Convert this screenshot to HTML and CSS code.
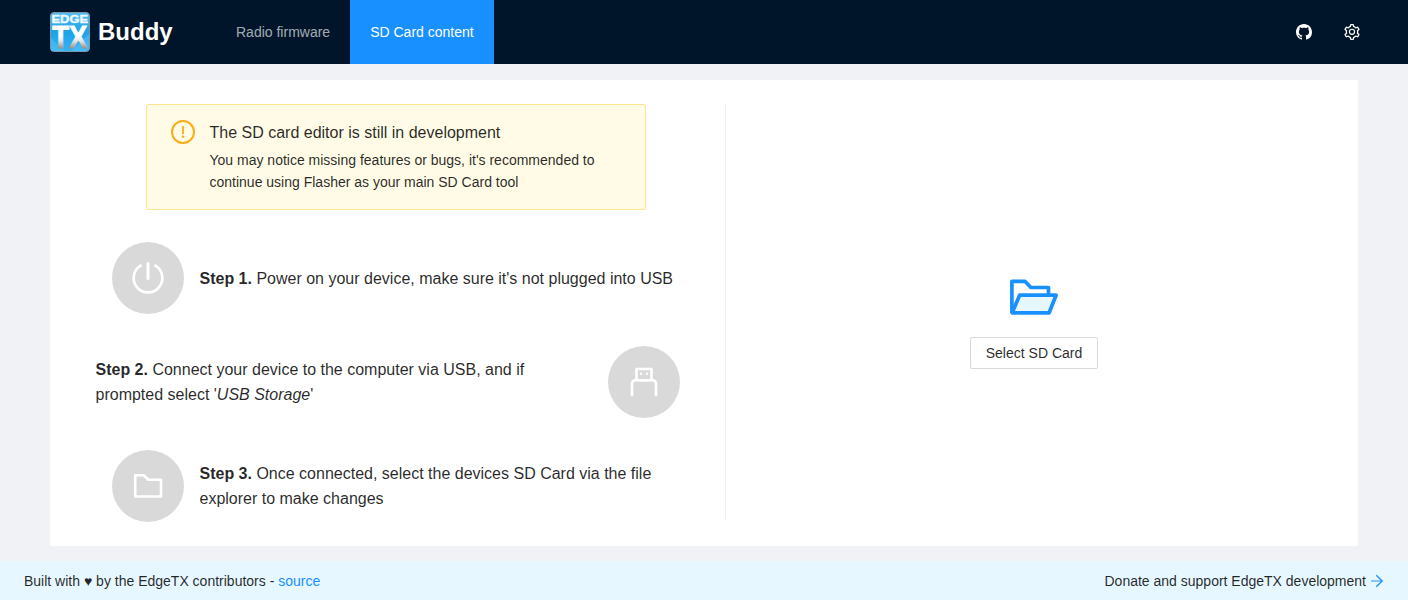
FILE: index.html
```html
<!DOCTYPE html>
<html lang="en">
<head>
<meta charset="utf-8">
<title>EdgeTX Buddy</title>
<link rel="stylesheet" href="styles.css">
</head>
<body>
<header class="header">
  <div class="brand">
    <svg class="logo" viewBox="0 0 40 40">
      <defs>
        <linearGradient id="sky" x1="0" y1="0" x2="0" y2="1"><stop offset="0" stop-color="#55bdec"/><stop offset=".5" stop-color="#1ba2e8"/><stop offset="1" stop-color="#35b4f4"/></linearGradient>
        <linearGradient id="metal" gradientUnits="userSpaceOnUse" x1="0" y1="14" x2="0" y2="36"><stop offset=".45" stop-color="#fff"/><stop offset=".68" stop-color="#e4e4e4"/><stop offset="1" stop-color="#969696"/></linearGradient>
      </defs>
      <rect x=".5" y=".5" width="39" height="39" rx="3.5" fill="url(#sky)" stroke="#7899a9"/>
      <path d="M1 26L14 39H1zM22 39l17-17v14l-3 3z" fill="#55c4fb" opacity=".5"/>
      <text class="logo-edge" x="1.5" y="11" textLength="36.5" lengthAdjust="spacingAndGlyphs">EDGE</text>
      <text class="logo-tx" x="2.2" y="35.5" textLength="35" lengthAdjust="spacingAndGlyphs" fill="url(#metal)" stroke="url(#metal)">TX</text>
    </svg>
    <span class="brand-name">Buddy</span>
  </div>
  <nav class="nav">
    <a class="nav-item">Radio firmware</a>
    <a class="nav-item active">SD Card content</a>
  </nav>
  <div class="tools">
    <svg class="tool" viewBox="0 0 16 16"><path fill="currentColor" d="M8 0C3.58 0 0 3.58 0 8c0 3.54 2.29 6.53 5.47 7.59.4.07.55-.17.55-.38 0-.19-.01-.82-.01-1.49-2.01.37-2.53-.49-2.69-.94-.09-.23-.48-.94-.82-1.13-.28-.15-.68-.52-.01-.53.63-.01 1.08.58 1.23.82.72 1.21 1.87.87 2.33.66.07-.52.28-.87.51-1.07-1.78-.2-3.64-.89-3.64-3.95 0-.87.31-1.59.82-2.15-.08-.2-.36-1.02.08-2.12 0 0 .67-.21 2.2.82.64-.18 1.32-.27 2-.27s1.36.09 2 .27c1.53-1.04 2.2-.82 2.2-.82.44 1.1.16 1.92.08 2.12.51.56.82 1.27.82 2.15 0 3.07-1.87 3.75-3.65 3.95.29.25.54.73.54 1.48 0 1.07-.01 1.93-.01 2.2 0 .21.15.46.55.38A8.01 8.01 0 0 0 16 8c0-4.42-3.58-8-8-8z"/></svg>
    <svg class="tool" viewBox="64 64 896 896"><path fill="currentColor" fill-rule="evenodd" d="M924.8 625.7l-65.5-56c3.1-19 4.7-38.4 4.7-57.8s-1.6-38.8-4.7-57.8l65.5-56a32.03 32.03 0 009.3-35.2l-.9-2.6a443.74 443.74 0 00-79.7-137.9l-1.8-2.1a32.12 32.12 0 00-35.1-9.5l-81.3 28.9c-30-24.6-63.5-44-99.7-57.6l-15.7-85a32.05 32.05 0 00-25.8-25.7l-2.7-.5c-52.1-9.4-106.9-9.4-159 0l-2.7.5a32.05 32.05 0 00-25.8 25.7l-15.8 85.4a351.86 351.86 0 00-99 57.4l-81.9-29.1a32 32 0 00-35.1 9.5l-1.8 2.1a446.02 446.02 0 00-79.7 137.9l-.9 2.6c-4.5 12.5-.8 26.5 9.3 35.2l66.3 56.6c-3.1 18.8-4.6 38-4.6 57.1 0 19.2 1.5 38.4 4.6 57.1L99 625.5a32.03 32.03 0 00-9.3 35.2l.9 2.6c18.1 50.4 44.9 96.9 79.7 137.9l1.8 2.1a32.12 32.12 0 0035.1 9.5l81.9-29.1c29.8 24.5 63.1 43.9 99 57.4l15.8 85.4a32.05 32.05 0 0025.8 25.7l2.7.5a449.4 449.4 0 00159 0l2.7-.5a32.05 32.05 0 0025.8-25.7l15.7-85a350 350 0 0099.7-57.6l81.3 28.9a32 32 0 0035.1-9.5l1.8-2.1c34.8-41.1 61.6-87.5 79.7-137.9l.9-2.6c4.5-12.3.8-26.3-9.3-35zM788.3 465.9c2.5 15.1 3.8 30.6 3.8 46.1s-1.3 31-3.8 46.1l-6.6 40.1 74.7 63.9a370.03 370.03 0 01-42.6 73.6L721 702.8l-31.4 25.8c-23.9 19.6-50.5 35-79.3 45.8l-38.1 14.3-17.9 97a377.5 377.5 0 01-85 0l-17.9-97.2-37.8-14.5c-28.5-10.8-55-26.2-78.7-45.7l-31.4-25.9-93.4 33.2c-17-22.9-31.2-47.6-42.6-73.6l75.5-64.5-6.5-40c-2.4-14.9-3.7-30.3-3.7-45.5 0-15.3 1.2-30.6 3.7-45.5l6.5-40-75.5-64.5c11.3-26.1 25.6-50.7 42.6-73.6l93.4 33.2 31.4-25.9c23.7-19.5 50.2-34.9 78.7-45.7l37.9-14.3 17.9-97.2c28.1-3.2 56.8-3.2 85 0l17.9 97 38.1 14.3c28.7 10.8 55.4 26.2 79.3 45.8l31.4 25.8 92.8-32.9c17 22.9 31.2 47.6 42.6 73.6L781.8 426l6.5 39.9z"/><circle cx="512" cy="502" r="144" fill="none" stroke="currentColor" stroke-width="64"/></svg>
  </div>
</header>
<main class="main">
  <div class="card">
    <section class="guide">
      <div class="alert">
        <svg class="alert-icon" viewBox="0 0 24 24"><circle cx="12" cy="12" r="11" fill="none" stroke="#faad14" stroke-width="2"/><path d="M11.1 6h1.8v8h-1.8z" fill="#faad14"/><circle cx="12" cy="16.7" r="1.2" fill="#faad14"/></svg>
        <div>
          <div class="alert-title">The SD card editor is still in development</div>
          <div class="alert-text">You may notice missing features or bugs, it's recommended to continue using Flasher as your main SD Card tool</div>
        </div>
      </div>
      <div class="step">
        <div class="avatar"><svg class="step-icon" viewBox="0 0 36 36"><path d="M10.6 5.7a14.35 14.35 0 1 0 14.8 0" stroke-width="2.7"/><path d="M18 3.5v15" stroke-width="3"/></svg></div>
        <div class="step-text"><b>Step 1.</b> Power on your device, make sure it's not plugged into USB</div>
      </div>
      <div class="step reverse">
        <div class="step-text"><b>Step 2.</b> Connect your device to the computer via USB, and if prompted select '<i>USB Storage</i>'</div>
        <div class="avatar"><svg class="step-icon" viewBox="0 0 36 36"><path d="M10.5 16V5h15v11M6 31.2V19.4a3 3 0 0 1 3-3h18a3 3 0 0 1 3 3v11.8" stroke-width="2.6"/><path d="M15 8.7v2M21 8.7v2" stroke-width="2.2" stroke-linecap="butt"/></svg></div>
      </div>
      <div class="step">
        <div class="avatar"><svg class="step-icon" viewBox="0 0 36 36"><path d="M5.2 7.3h8.6l4.5 4.4H31v16.8H5.2z" stroke-width="2.6"/></svg></div>
        <div class="step-text"><b>Step 3.</b> Once connected, select the devices SD Card via the file explorer to make changes</div>
      </div>
    </section>
    <div class="divider"></div>
    <section class="picker">
      <svg class="folder" viewBox="0 0 48 36"><path d="M1.9 34V2.3h13l6 6.2h17.6V16" fill="none" stroke="#1890ff" stroke-width="3.7" stroke-linejoin="round"/><path d="M9.6 16.2h36.5l-7 17.6H2.2z" fill="#e6f7ff" stroke="#1890ff" stroke-width="3.7" stroke-linejoin="round"/></svg>
      <button class="button">Select SD Card</button>
    </section>
  </div>
</main>
<footer class="footer">
  <div>Built with ♥ by the EdgeTX contributors - <a class="link">source</a></div>
  <div class="donate">Donate and support EdgeTX development
    <svg class="arrow" viewBox="0 0 14 14"><path d="M1 7h11" opacity=".75"/><path d="M6.3 1.2L12.2 7l-5.9 5.8"/></svg>
  </div>
</footer>
</body>
</html>
```
FILE: styles.css
```css
* { box-sizing: border-box; }
body {
  margin: 0;
  height: 600px;
  display: flex;
  flex-direction: column;
  background: #f0f2f5;
  color: rgba(0, 0, 0, .85);
  font: 14px/22px "Liberation Sans", Arial, sans-serif;
}
.header {
  height: 64px;
  flex: none;
  display: flex;
  align-items: center;
  padding: 0 48px 0 50px;
  background: #001529;
  color: #fff;
}
.brand { display: flex; align-items: center; width: 166px; gap: 8px; }
.logo { width: 40px; height: 40px; flex: none; }
.logo-edge { font: bold 11.5px "Liberation Sans", sans-serif; fill: #edf9ff; stroke: #edf9ff; stroke-width: .4px; }
.logo-tx { font: bold 30.5px "Liberation Sans", sans-serif; stroke-width: 1px; }
.brand-name { font-size: 24px; font-weight: bold; line-height: 32px; }
.nav { display: flex; }
.nav-item { padding: 0 20px; line-height: 64px; color: rgba(255, 255, 255, .65); }
.nav-item.active { background: #1890ff; color: #fff; }
.tools { display: flex; gap: 32px; margin-left: auto; }
.tool { width: 16px; height: 16px; }
.main { flex: 1; padding: 16px 50px 15px; }
.card { height: 466px; padding: 24px; display: flex; background: #fff; }
.guide { width: 651px; padding-right: 7px; display: flex; flex-direction: column; }
.alert {
  width: 500px;
  height: 106px;
  flex: none;
  margin: 0 auto 32px;
  padding: 15px 24px;
  display: flex;
  gap: 14.5px;
  border: 1px solid #ffe58f;
  border-radius: 2px;
  background: #fffbe6;
}
.alert-icon { width: 24px; height: 24px; flex: none; }
.alert-title { font-size: 16px; line-height: 25px; margin-bottom: 4px; }
.step { height: 72px; flex: none; margin: 0 22px 32px 38px; display: flex; align-items: center; gap: 15.5px; font-size: 16px; line-height: 25px; }
.step.reverse { margin: 0 38px 32px 21.5px; justify-content: space-between; }
.reverse .step-text { width: 480px; }
.avatar {
  width: 72px;
  height: 72px;
  flex: none;
  display: flex;
  align-items: center;
  justify-content: center;
  border-radius: 50%;
  background: #d9d9d9;
}
.step-icon { width: 36px; height: 36px; fill: none; stroke: #fff; stroke-linecap: round; stroke-linejoin: round; }
.divider { width: 1px; height: 416px; background: #f0f0f0; }
.picker { flex: 1; padding: 175px 0 0 8px; display: flex; flex-direction: column; align-items: center; }
.folder { width: 48px; height: 36px; margin-bottom: 22px; }
.button {
  height: 32px;
  width: 128px;
  padding: 0;
  border: 1px solid #d9d9d9;
  border-radius: 2px;
  background: #fff;
  color: inherit;
  font: inherit;
}
.footer {
  height: 39px;
  flex: none;
  display: flex;
  align-items: center;
  justify-content: space-between;
  padding: 0 24px;
  background: #e6f7ff;
}
.link { color: #1890ff; }
.donate { display: flex; align-items: center; gap: 4px; }
.arrow { width: 14px; height: 14px; fill: none; stroke: #1890ff; stroke-width: 1.3; }
```
